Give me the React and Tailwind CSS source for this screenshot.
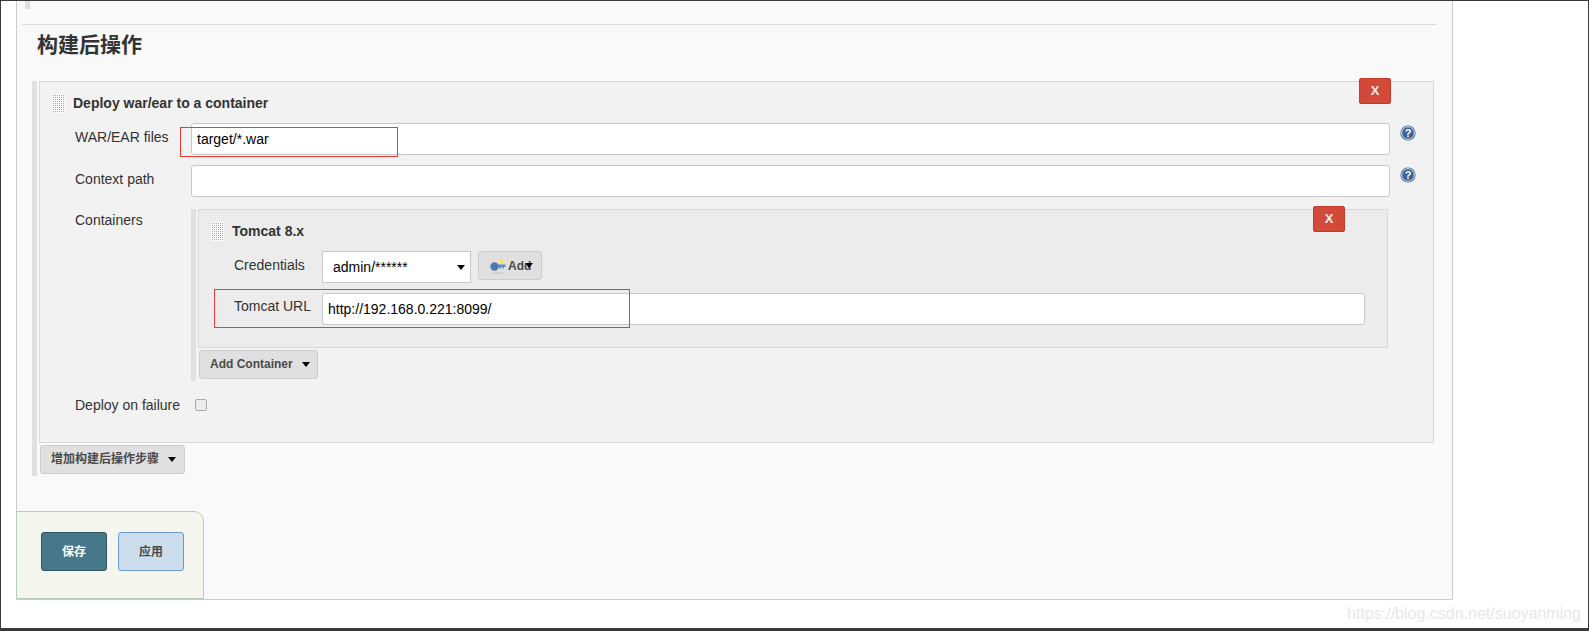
import React from "react";

const FONT = "font-['Liberation_Sans','Noto_Sans_CJK_SC',sans-serif]";

// dotted drag handle in front of each section title
const DragHandle = ({ className }) => (
  <svg className={className} width="13" height="19" viewBox="0 0 13 19">
    <rect width="13" height="19" fill="#fafafa" />
    {[1, 3, 5, 7, 9, 11].map((x) =>
      [1, 3, 5, 7, 9, 11, 13, 15, 17].map((y) => (
        <rect key={`${x}-${y}`} x={x} y={y} width="1" height="1" fill="#a8a8a8" />
      ))
    )}
  </svg>
);

const HelpIcon = ({ className }) => (
  <svg className={className} width="16" height="16" viewBox="0 0 16 16">
    <circle cx="8" cy="8" r="7.6" fill="#3a6298" />
    <circle cx="8" cy="8" r="6.3" fill="none" stroke="#dfe7f2" strokeWidth="1" />
    <text x="8" y="12" textAnchor="middle" fontSize="11" fontWeight="700" fill="#ffffff" fontFamily="Liberation Sans">?</text>
  </svg>
);

const KeyIcon = () => (
  <svg width="16" height="16" viewBox="0 0 16 16" className="shrink-0">
    <ellipse cx="7.5" cy="15" rx="6" ry="1" fill="#cfcfcf" />
    <circle cx="11.5" cy="4" r="2.5" fill="#f6ea5c" />
    <path d="M7 6.5h8.5v2.5h-1.5v1.5h-1.5v-1.5h-1.5v1.5h-1.5v-1h-2.5z" fill="#5f8ac2" />
    <circle cx="4.5" cy="8.5" r="4.2" fill="#4f78b0" />
  </svg>
);

const Caret = ({ className = "" }) => (
  <span className={`inline-block w-0 h-0 border-x-[4px] border-x-transparent border-t-[5px] border-t-black ${className}`} />
);

const DeleteButton = ({ className }) => (
  <button className={`absolute w-[32px] h-[26px] bg-[#d24939] border border-[#c63b2c] rounded-[2px] flex items-center justify-center text-[#f4ecea] text-[13px] font-bold ${className}`}>
    X
  </button>
);

const MenuButton = ({ label, className }) => (
  <button className={`flex items-center h-[29px] pb-[1px] bg-[#e0e0e0] border border-[#cdcdcd] rounded-[3px] text-[12px] font-bold text-[#4a4a4a] ${className}`}>
    {label}
    <Caret className="ml-[9px]" />
  </button>
);

const TextBox = ({ value, className = "" }) => (
  <div className={`h-[32px] bg-white border border-[#c8c8c8] rounded-[3px] pl-[5px] flex items-center text-[14px] text-black ${className}`}>
    {value}
  </div>
);

const Label = ({ children, className = "" }) => (
  <div className={`text-[14px] leading-[18px] text-[#333] ${className}`}>{children}</div>
);

export default function App() {
  return (
    <div className={`${FONT} relative w-[1589px] h-[631px] overflow-hidden bg-white border-t border-x border-b-[3px] border-[#3a3a3a]`}>
      <div className="ml-[15px] w-[1437px] bg-[#f9f9f9] border-x border-b border-[#cccccc] rounded-br-[2px]">
        {/* tail of the section above */}
        <div className="ml-[8px] w-[5px] h-[8px] bg-[#e0e0e0]" />
        <div className="mt-[15px] ml-[5px] w-[1414px] h-px bg-[#dddddd]" />

        <h2 className="ml-[20px] mt-[8px] h-[24px] leading-[24px] text-[21px] font-bold text-[#333]">构建后操作</h2>

        <div className="ml-[15px] mt-[24px] w-[1402px] border-l-[5px] border-[#e0e0e0] pl-[2px] pb-[2px]">
          <div className="relative bg-[#f2f2f2] border border-[#d8d8d8] pt-[12px] pb-[28px]">
            <DeleteButton className="right-[42px] -top-[4px]" />
            <div className="flex items-center pl-[12px]">
              <DragHandle />
              <span className="ml-[8px] text-[14px] leading-[19px] font-bold text-[#333]">Deploy war/ear to a container</span>
            </div>

            <div className="flex mt-[10px]">
              <Label className="w-[151px] pl-[35px] pt-[5px]">WAR/EAR files</Label>
              <TextBox value="target/*.war" className="w-[1199px]" />
              <HelpIcon className="ml-[10px] mt-[2px]" />
            </div>

            <div className="flex mt-[10px]">
              <Label className="w-[151px] pl-[35px] pt-[5px]">Context path</Label>
              <TextBox value="" className="w-[1199px]" />
              <HelpIcon className="ml-[10px] mt-[2px]" />
            </div>

            <div className="flex mt-[12px]">
              <Label className="w-[151px] pl-[35px] pt-[2px]">Containers</Label>
              <div className="w-[1197px] border-l-[5px] border-[#e0e0e0] pl-[2px] pb-[2px]">
                <div className="relative bg-[#ececec] border border-[#d8d8d8] pt-[12px] pb-[22px]">
                  <DeleteButton className="right-[42px] -top-[4px]" />
                  <div className="flex items-center pl-[12px]">
                    <DragHandle />
                    <span className="ml-[8px] text-[14px] leading-[19px] font-bold text-[#333]">Tomcat 8.x</span>
                  </div>

                  <div className="flex mt-[10px]">
                    <Label className="w-[123px] pl-[35px] pt-[5px]">Credentials</Label>
                    <div className="w-[149px] h-[32px] bg-white border border-[#c8c8c8] pl-[10px] pr-[5px] flex items-center justify-between text-[14px] text-black">
                      admin/******
                      <Caret />
                    </div>
                    <button className="relative ml-[7px] w-[64px] h-[29px] bg-[#e0e0e0] border border-[#cdcdcd] rounded-[3px] flex items-center pl-[11px] text-[12px] font-bold text-[#4a4a4a]">
                      <KeyIcon />
                      <span className="ml-[2px]">Add</span>
                      <Caret className="absolute left-[46px] top-[11px]" />
                    </button>
                  </div>

                  <div className="flex mt-[10px]">
                    <Label className="w-[123px] pl-[35px] pt-[4px]">Tomcat URL</Label>
                    <TextBox value="http://192.168.0.221:8099/" className="w-[1043px]" />
                  </div>
                </div>
                <MenuButton label="Add Container" className="ml-px mt-[2px] w-[119px] pl-[10px]" />
              </div>
            </div>

            <div className="flex items-center mt-[15px]">
              <Label className="w-[155px] pl-[35px]">Deploy on failure</Label>
              <span className="w-[12px] h-[12px] bg-[#ececec] border border-[#aaaaaa] rounded-[2px]" />
            </div>
          </div>
          <MenuButton label="增加构建后操作步骤" className="ml-px mt-[2px] w-[145px] pl-[10px]" />
        </div>

        {/* sticky save / apply bar */}
        <div className="-ml-px mt-[35px] w-[188px] h-[88px] bg-[#f5f6ee] border border-[#b5cfb9] rounded-tr-[10px] rounded-bl-[2px] flex gap-[11px] pl-[24px] pt-[20px]">
          <button className="w-[66px] h-[39px] bg-[#46788a] border border-[#2f5563] rounded-[3px] text-[12px] font-bold text-white">保存</button>
          <button className="w-[66px] h-[39px] bg-[#ccdded] border border-[#6a9bd0] rounded-[3px] text-[12px] font-bold text-[#4a4a4a]">应用</button>
        </div>
      </div>

      {/* red annotation boxes drawn over the screenshot */}
      <div className="absolute left-[179px] top-[126px] w-[218px] h-[30px] border border-[#f03a3a]" />
      <div className="absolute left-[213px] top-[288px] w-[416px] h-[39px] border border-[#f03a3a]" />

      <div className="absolute right-[7px] bottom-[5px] text-[16px] leading-[18px] text-[#e8e8e8]">https://blog.csdn.net/suoyanming</div>
    </div>
  );
}
